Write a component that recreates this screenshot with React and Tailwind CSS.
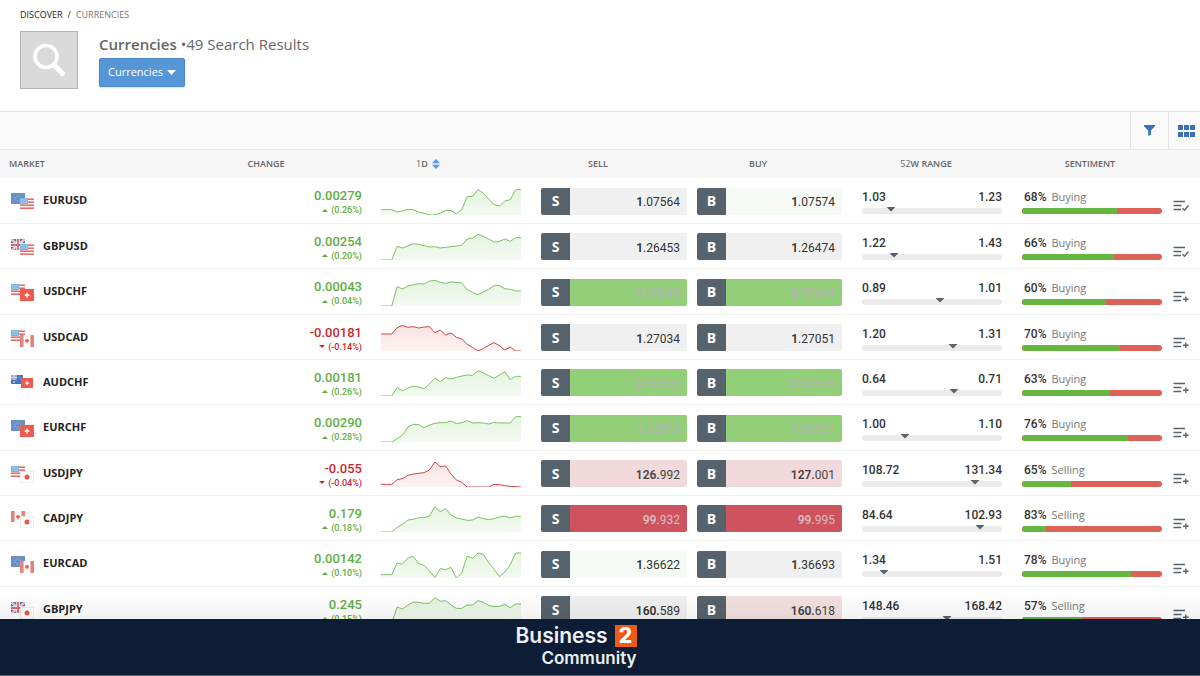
import { useId } from 'react';

const markets = [
  {
    name: 'EURUSD', flags: ['eu', 'us'], change: '0.00279', pct: '0.26%', up: true,
    sell: ['1', '.07564', 'idle'], buy: ['1', '.07574', 'upFaint'],
    low: '1.03', high: '1.23', pos: 21, pctSide: 68, side: 'Buying', watched: true,
    points: [16, 16, 16, 9, 12, 17, 16, 9, 5, 0, 0, 5, 14, 13, 4, 16, 55, 56, 76, 66, 48, 31, 27, 42, 46, 76, 76],
  },
  {
    name: 'GBPUSD', flags: ['gb', 'us'], change: '0.00254', pct: '0.20%', up: true,
    sell: ['1', '.26453', 'idle'], buy: ['1', '.26474', 'idle'],
    low: '1.22', high: '1.43', pos: 23, pctSide: 66, side: 'Buying', watched: true,
    points: [0, 0, 0, 41, 36, 42, 49, 47, 43, 39, 40, 36, 38, 40, 42, 45, 63, 66, 77, 71, 63, 54, 56, 63, 56, 67, 67],
  },
  {
    name: 'USDCHF', flags: ['us', 'ch'], change: '0.00043', pct: '0.04%', up: true,
    sell: ['0', '.95649', 'up'], buy: ['0', '.95664', 'up'],
    low: '0.89', high: '1.01', pos: 56, pctSide: 60, side: 'Buying',
    points: [0, 0, 0, 58, 51, 60, 64, 67, 66, 75, 77, 71, 68, 72, 71, 69, 49, 41, 34, 42, 50, 61, 61, 52, 50, 45, 45],
  },
  {
    name: 'USDCAD', flags: ['us', 'ca'], change: '-0.00181', pct: '-0.14%', up: false,
    sell: ['1', '.27034', 'idle'], buy: ['1', '.27051', 'idle'],
    low: '1.20', high: '1.31', pos: 65, pctSide: 70, side: 'Buying',
    points: [51, 51, 51, 70, 77, 71, 73, 69, 72, 73, 55, 63, 48, 54, 41, 36, 20, 11, 0, 7, 17, 25, 16, 3, 12, 0, 0],
  },
  {
    name: 'AUDCHF', flags: ['au', 'ch'], change: '0.00181', pct: '0.26%', up: true,
    sell: ['0', '.68605', 'up'], buy: ['0', '.68645', 'up'],
    low: '0.64', high: '0.71', pos: 66, pctSide: 63, side: 'Buying',
    points: [0, 0, 0, 26, 15, 24, 29, 27, 22, 36, 54, 43, 55, 51, 56, 60, 63, 62, 76, 69, 61, 53, 63, 73, 49, 59, 59],
  },
  {
    name: 'EURCHF', flags: ['eu', 'ch'], change: '0.00290', pct: '0.28%', up: true,
    sell: ['1', '.02873', 'up'], buy: ['1', '.02921', 'up'],
    low: '1.00', high: '1.10', pos: 31, pctSide: 76, side: 'Buying',
    points: [0, 0, 0, 10, 20, 45, 53, 52, 43, 51, 56, 58, 58, 63, 55, 58, 64, 57, 58, 57, 54, 59, 57, 57, 57, 76, 76],
  },
  {
    name: 'USDJPY', flags: ['us', 'jp'], change: '-0.055', pct: '-0.04%', up: false,
    sell: ['126.', '992', 'downLight'], buy: ['127.', '001', 'downLight'],
    low: '108.72', high: '131.34', pos: 81, pctSide: 65, side: 'Selling',
    points: [8, 8, 8, 22, 25, 35, 39, 41, 43, 51, 75, 61, 63, 39, 21, 14, 0, 0, 0, 0, 0, 8, 7, 4, 2, 1, 0],
  },
  {
    name: 'CADJPY', flags: ['ca', 'jp'], change: '0.179', pct: '0.18%', up: true,
    sell: ['99.', '932', 'down'], buy: ['99.', '995', 'down'],
    low: '84.64', high: '102.93', pos: 84, pctSide: 83, side: 'Selling',
    points: [0, 0, 0, 14, 23, 36, 38, 43, 43, 48, 76, 61, 70, 51, 42, 39, 35, 36, 45, 40, 37, 40, 45, 48, 42, 47, 47],
  },
  {
    name: 'EURCAD', flags: ['eu', 'ca'], change: '0.00142', pct: '0.10%', up: true,
    sell: ['1', '.36622', 'upFaint'], buy: ['1', '.36693', 'idle'],
    low: '1.34', high: '1.51', pos: 16, pctSide: 78, side: 'Buying',
    points: [10, 10, 10, 45, 42, 60, 65, 43, 38, 21, 1, 28, 25, 32, 0, 15, 66, 59, 75, 71, 46, 26, 4, 18, 40, 75, 75],
  },
  {
    name: 'GBPJPY', flags: ['gb', 'jp'], change: '0.245', pct: '0.15%', up: true,
    sell: ['160.', '589', 'idle'], buy: ['160.', '618', 'downFaint'],
    low: '148.46', high: '168.42', pos: 61, pctSide: 57, side: 'Selling',
    points: [0, 0, 0, 48, 42, 54, 63, 62, 59, 59, 76, 65, 67, 54, 44, 44, 54, 54, 67, 62, 53, 49, 50, 56, 46, 57, 57],
  },
];

const priceTones = {
  idle: 'bg-[#f0f0f0] text-[#333]',
  upFaint: 'bg-[#f5fbf4] text-[#333]',
  up: 'bg-[#93cf79] text-[#b6b1b6]',
  downFaint: 'bg-[#f3e0e1] text-[#444]',
  downLight: 'bg-[#f2d9db] text-[#444]',
  down: 'bg-[#cd535e] text-[#dcbcbf]',
};

function FlagArt({ code }) {
  switch (code) {
    case 'us':
      return (
        <>
          <rect width="14" height="12" fill="#fff" />
          {[0, 3, 6, 9].map((y) => (
            <rect key={y} y={y + 0.4} width="14" height="1.6" fill="#ec6a67" />
          ))}
          <rect width="8" height="6" fill="#7db4e6" />
          <path d="M1 1.5h6M1 3h6M1 4.5h6" stroke="#c4def5" strokeWidth=".6" strokeDasharray="1 .7" />
        </>
      );
    case 'eu':
      return (
        <>
          <rect width="14" height="12" fill="#6b90cb" />
          <circle cx="7" cy="5.5" r="2.8" fill="none" stroke="#b4cb86" strokeWidth=".9" strokeDasharray=".9 1.3" />
        </>
      );
    case 'gb':
      return (
        <>
          <rect width="14" height="12" fill="#5572b4" />
          <path d="M0 0l14 12M14 0L0 12" stroke="#f5e9ee" strokeWidth="2.2" />
          <path d="M0 0l14 12M14 0L0 12" stroke="#e58a90" strokeWidth=".8" />
          <path d="M7 0v12M0 6h14" stroke="#fff" strokeWidth="3.4" />
          <path d="M7 0v12M0 6h14" stroke="#e46468" strokeWidth="1.8" />
        </>
      );
    case 'ch':
      return (
        <>
          <rect width="14" height="12" fill="#f05b4e" />
          <path d="M7 3.8v4.6M4.7 6.1h4.6" stroke="#fff" strokeWidth="1.6" />
        </>
      );
    case 'ca':
      return (
        <>
          <rect width="14" height="12" fill="#fff" />
          <rect width="3.6" height="12" fill="#e5827f" />
          <rect x="10.4" width="3.6" height="12" fill="#e5827f" />
          <path d="M7 3.4l1 1.4 1.2-.2-.5 2-1.3.8v1h-.8v-1l-1.3-.8-.5-2 1.2.2z" fill="#ee5a52" />
        </>
      );
    case 'au':
      return (
        <>
          <rect width="14" height="12" fill="#4d74b9" />
          <rect width="7" height="6" fill="#93a4d3" />
          <path d="M3.5 0v6M0 3h7" stroke="#eccbd4" strokeWidth="1.4" />
          <circle cx="3.5" cy="8.6" r="1" fill="#fff" />
          <path d="M9.5 2v1M11.5 4.5v1" stroke="#dbe6f7" strokeWidth=".9" />
        </>
      );
    default:
      return (
        <>
          <rect x=".25" y=".25" width="13.5" height="11.5" fill="#fff" stroke="#e2e2e2" strokeWidth=".5" />
          <circle cx="7" cy="6" r="2.5" fill="#f0554a" />
        </>
      );
  }
}

function FlagPair({ flags, name }) {
  const small = flags[0] === 'au';
  return (
    <svg width="23" height="17" viewBox="0 0 23 17" role="img" aria-label={name} className="mt-[3px] shrink-0">
      <svg width={small ? 12 : 14} height={small ? 9 : 11} viewBox="0 0 14 11" preserveAspectRatio="none">
        <FlagArt code={flags[0]} />
      </svg>
      <svg
        x={small ? 10 : 9}
        y={small ? 3 : 5}
        width={small ? 12 : 14}
        height={small ? 10 : 12}
        viewBox="0 0 14 12"
        preserveAspectRatio="none"
      >
        <FlagArt code={flags[1]} />
      </svg>
    </svg>
  );
}

function Sparkline({ points, up }) {
  const id = useId();
  const step = 140 / (points.length - 1);
  const line = points.map((v, i) => `${i * step},${27 - v / 3}`).join(' ');

  return (
    <svg width="140" height="27" viewBox="0 0 140 27" className="block" aria-hidden="true">
      <linearGradient id={id} x1="0" y1="0" x2="0" y2="1">
        <stop offset="0" stopColor={up ? '#8dcb74' : '#e58085'} stopOpacity=".22" />
        <stop offset="1" stopColor={up ? '#8dcb74' : '#e58085'} stopOpacity=".1" />
      </linearGradient>
      <polygon points={`0,27 ${line} 140,27`} fill={`url(#${id})`} />
      <polyline points={line} fill="none" stroke={up ? '#7cc163' : '#cf4447'} strokeWidth="1" />
    </svg>
  );
}

function PriceButton({ letter, price }) {
  const [strong, rest, tone] = price;
  return (
    <button type="button" className="flex h-[27px] w-full overflow-hidden rounded-[2px]">
      <span className="flex w-[29px] items-center justify-center bg-[#56626c] text-sm font-bold text-white">
        {letter}
      </span>
      <span
        className={`flex flex-1 items-center justify-end pt-[2px] pr-[7px] font-[Roboto,sans-serif] text-xs ${priceTones[tone]}`}
      >
        <b className="font-semibold">{strong}</b>
        {rest}
      </span>
    </button>
  );
}

function RangeBar({ low, high, pos }) {
  return (
    <div>
      <div className="flex justify-between font-[Roboto,sans-serif] text-xs leading-4 font-medium text-[#333]">
        <span>{low}</span>
        <span>{high}</span>
      </div>
      <div className="relative mt-[3px] h-[6px] rounded-full bg-[#ebebeb]">
        <svg
          width="9"
          height="5"
          viewBox="0 0 9 5"
          className="absolute -top-px -translate-x-1/2"
          style={{ left: `${pos}%` }}
          aria-hidden="true"
        >
          <path d="M0 0h9L4.5 4.6z" fill="#56626c" />
        </svg>
      </div>
    </div>
  );
}

function Sentiment({ pctSide, side }) {
  const green = side === 'Buying' ? pctSide : 100 - pctSide;
  return (
    <div>
      <div className="flex items-center gap-[5px] pl-[2px] leading-4">
        <span className="font-[Roboto,sans-serif] text-xs leading-4 font-medium text-[#333]">{pctSide}%</span>
        <span className="text-[11px] leading-4 text-[#777]">{side}</span>
      </div>
      <div className="mt-[3px] flex h-[6px] overflow-hidden rounded-full bg-[#dd6157]">
        <div className="bg-[#65b741]" style={{ width: `${green}%` }} />
      </div>
    </div>
  );
}

function WatchIcon({ watched }) {
  return (
    <svg width="16" height="12" viewBox="0 0 16 12" fill="none" stroke="#56626c" strokeWidth="1.4" aria-hidden="true">
      <path d="M.5 1.5H12M.5 5.5h8M.5 9.5H8" />
      {watched ? <path d="M9.5 8.2l2 2 4-4.7" /> : <path d="M12.8 5.5v5.6M10 8.3h5.6" />}
    </svg>
  );
}

function Header() {
  return (
    <header className="border-b border-[#e3e3e3] px-5 pt-2 pb-[22px]">
      <nav aria-label="Breadcrumb" className="flex gap-[5px] text-[9px] leading-[14px]">
        <a href="#discover" className="text-[#222]">DISCOVER</a>
        <span className="text-[#222]">/</span>
        <a href="#currencies" className="text-[#777]">CURRENCIES</a>
      </nav>
      <div className="mt-[9px] flex gap-[21px]">
        <div className="flex h-[58px] w-[58px] items-center justify-center border border-[#b5b5b5] bg-[#dadada]">
          <svg width="34" height="34" viewBox="0 0 34 34" fill="none" stroke="#fff" aria-hidden="true">
            <circle cx="14" cy="13.5" r="11" strokeWidth="3.6" />
            <path d="M22 22l8.5 8.5" strokeWidth="5" strokeLinecap="round" />
          </svg>
        </div>
        <div>
          <h1 className="mt-[3px] text-[15px] leading-5 text-[#666]">
            <b className="font-semibold">Currencies</b> •49 Search Results
          </h1>
          <button
            type="button"
            className="mt-1 flex h-[29px] items-center gap-1 rounded-[2px] border border-[#4a87c7] bg-[#5596d6] px-2 text-[11px] text-white shadow-sm"
          >
            Currencies
            <svg width="9" height="5" viewBox="0 0 9 5" aria-hidden="true">
              <path d="M0 0h9L4.5 5z" fill="#fff" />
            </svg>
          </button>
        </div>
      </div>
    </header>
  );
}

function Toolbar() {
  return (
    <div className="flex h-[38px] justify-end border-b border-[#e6e6e6] bg-[#fafafa]">
      <button type="button" aria-label="Filter" className="flex w-[38px] items-center justify-center border-l border-[#e3e3e3]">
        <svg width="11" height="11" viewBox="0 0 11 11" aria-hidden="true">
          <path d="M0 0h11v1.2L7 5.5v4L4.2 11V5.5L0 1.2z" fill="#3a72b8" />
        </svg>
      </button>
      <button type="button" aria-label="Grid view" className="flex w-8 items-center justify-center border-l border-[#e3e3e3] pl-1">
        <svg width="17" height="12" viewBox="0 0 17 12" fill="#3a72b8" aria-hidden="true">
          <path d="M0 0h5v5H0zM6 0h5v5H6zM12 0h5v5h-5zM0 7h5v5H0zM6 7h5v5H6zM12 7h5v5h-5z" />
        </svg>
      </button>
    </div>
  );
}

export default function App() {
  return (
    <div className="flex h-screen flex-col overflow-hidden bg-white font-['Open_Sans',sans-serif]">
      <main className="relative min-h-0 flex-1 overflow-hidden">
        <Header />
        <Toolbar />
        <table className="w-full table-fixed border-collapse">
          <colgroup>
            <col className="w-40" />
            <col />
            <col className="w-40" />
            <col className="w-40" />
            <col className="w-40" />
            <col className="w-40" />
            <col className="w-40" />
            <col className="w-7" />
          </colgroup>
          <thead className="bg-[#f6f6f6] text-[9px] text-[#666]">
            <tr className="h-7">
              <th className="pl-[9px] text-left font-semibold">MARKET</th>
              <th className="font-semibold">CHANGE</th>
              <th className="pr-12 font-semibold">
                <button type="button" className="inline-flex items-center gap-1">
                  <span>
                    <span className="font-normal">1</span>D
                  </span>
                  <svg width="8" height="10" viewBox="0 0 8 10" fill="#4e9be8" aria-hidden="true">
                    <path d="M4 0l4 4.3H0zM4 10l4-4.3H0z" />
                  </svg>
                </button>
              </th>
              <th className="pr-7 font-semibold">SELL</th>
              <th className="pr-7 font-semibold">BUY</th>
              <th className="pr-3 font-semibold">
                <span className="font-normal">52</span>W RANGE
              </th>
              <th className="pr-1 font-semibold">SENTIMENT</th>
              <th />
            </tr>
          </thead>
          <tbody>
            {markets.map((m) => (
              <tr key={m.name} className="h-[45px] border-b border-[#efefef] nth-[3n]:h-[46px]">
                <td className="p-0 pl-[11px]">
                  <div className="flex items-center gap-[9px]">
                    <FlagPair flags={m.flags} name={m.name} />
                    <a href={`#${m.name}`} className="text-[11px] leading-4 font-bold text-[#222]">
                      {m.name}
                    </a>
                  </div>
                </td>
                <td className={`p-0 pt-1 pr-[10px] text-right font-[Roboto,sans-serif] ${m.up ? 'text-[#5fae42]' : 'text-[#c5292d]'}`}>
                  <div className="text-[13px] leading-4 font-medium">{m.change}</div>
                  <div className="flex items-center justify-end gap-[3px] text-[9px] leading-3 font-medium">
                    <svg width="6" height="3" viewBox="0 0 6 3" fill="currentColor" aria-hidden="true">
                      <path d={m.up ? 'M0 3h6L3 0z' : 'M0 0h6L3 3z'} />
                    </svg>
                    <span>({m.pct})</span>
                  </div>
                </td>
                <td className="p-0 pt-[2px] pl-[9px]">
                  <Sparkline points={m.points} up={m.up} />
                </td>
                <td className="p-0 pt-[2px] pr-[5px] pl-[9px]">
                  <PriceButton letter="S" price={m.sell} />
                </td>
                <td className="p-0 pt-[2px] pr-[10px] pl-[5px]">
                  <PriceButton letter="B" price={m.buy} />
                </td>
                <td className="p-0 px-[10px] pt-[3px]">
                  <RangeBar low={m.low} high={m.high} pos={m.pos} />
                </td>
                <td className="p-0 px-[10px] pt-[3px]">
                  <Sentiment pctSide={m.pctSide} side={m.side} />
                </td>
                <td className="p-0 pl-px">
                  <button type="button" aria-label={`Watch ${m.name}`} className="flex pt-3">
                    <WatchIcon watched={m.watched} />
                  </button>
                </td>
              </tr>
            ))}
          </tbody>
        </table>
        <div className="pointer-events-none absolute inset-x-0 bottom-0 h-7 bg-linear-to-b from-black/0 to-black/5" />
      </main>
      <footer className="flex h-[57px] shrink-0 justify-center border-b border-[#5a6577] bg-[#0d1d35] pt-[5px] pr-12 font-[Inter,sans-serif] text-[#eef0f4]">
        <div className="flex flex-col items-end">
          <div className="flex items-center gap-[7px] text-[21px] leading-6 font-semibold">
            Business
            <span className="flex h-[22px] w-[22px] items-center justify-center bg-[#f15a16] font-extrabold text-white">2</span>
          </div>
          <div className="text-[17px] leading-5 font-semibold">Community</div>
        </div>
      </footer>
    </div>
  );
}
